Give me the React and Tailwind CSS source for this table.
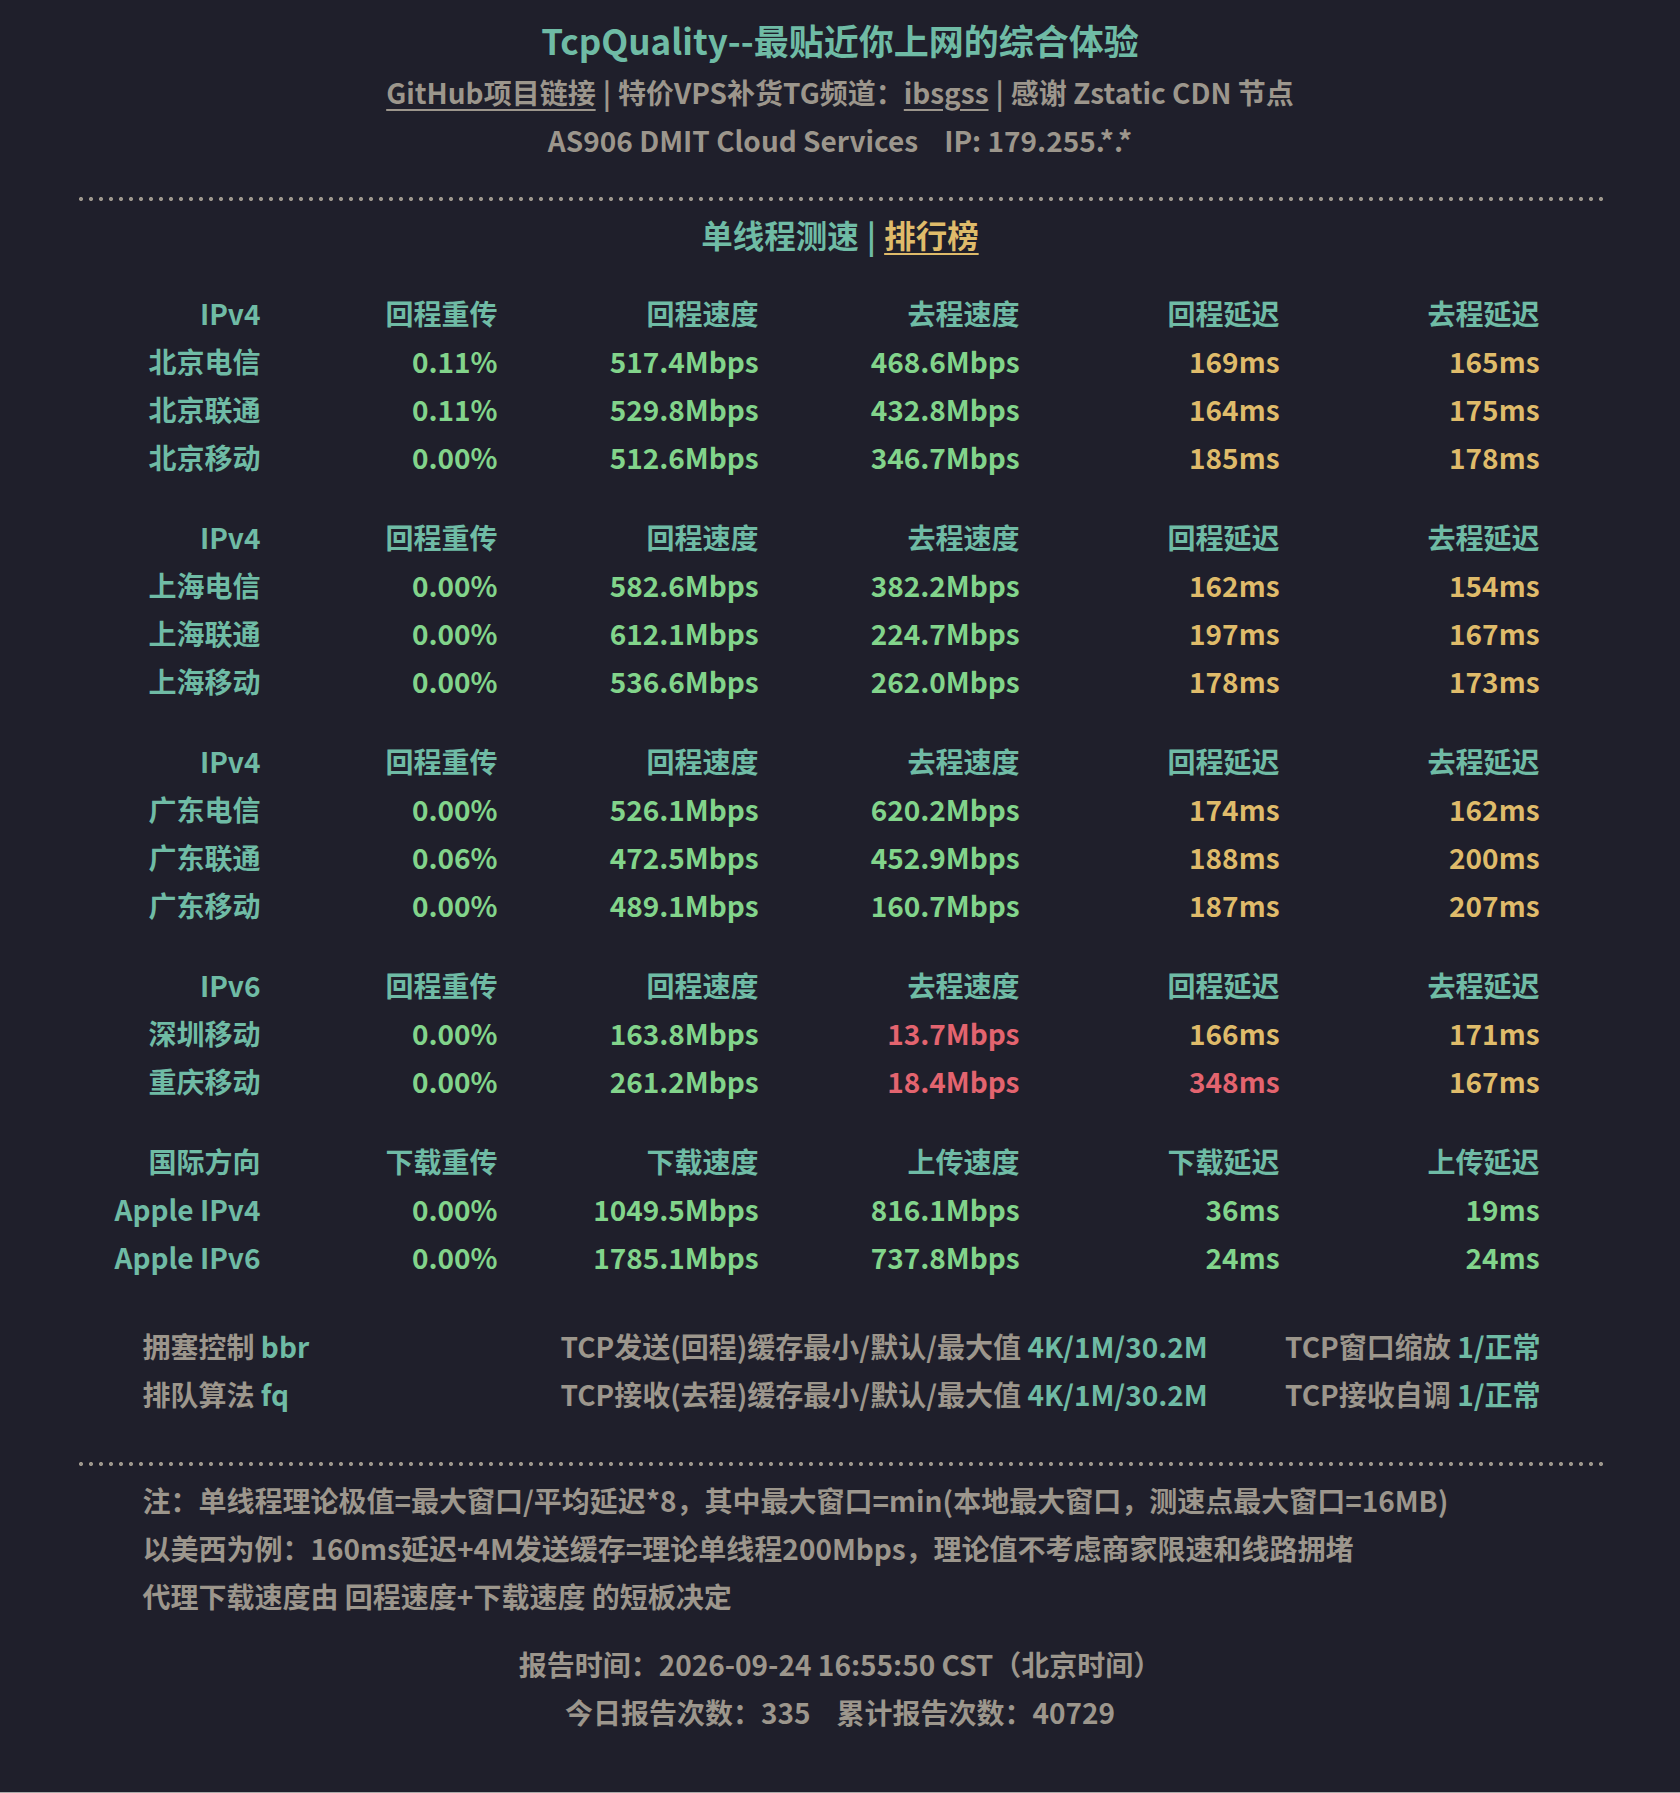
const groups = [
  {
    head: ['IPv4', '回程重传', '回程速度', '去程速度', '回程延迟', '去程延迟'],
    rows: [
      ['北京电信', '0.11%', '517.4Mbps', '468.6Mbps', '169ms', '165ms'],
      ['北京联通', '0.11%', '529.8Mbps', '432.8Mbps', '164ms', '175ms'],
      ['北京移动', '0.00%', '512.6Mbps', '346.7Mbps', '185ms', '178ms'],
    ],
  },
  {
    head: ['IPv4', '回程重传', '回程速度', '去程速度', '回程延迟', '去程延迟'],
    rows: [
      ['上海电信', '0.00%', '582.6Mbps', '382.2Mbps', '162ms', '154ms'],
      ['上海联通', '0.00%', '612.1Mbps', '224.7Mbps', '197ms', '167ms'],
      ['上海移动', '0.00%', '536.6Mbps', '262.0Mbps', '178ms', '173ms'],
    ],
  },
  {
    head: ['IPv4', '回程重传', '回程速度', '去程速度', '回程延迟', '去程延迟'],
    rows: [
      ['广东电信', '0.00%', '526.1Mbps', '620.2Mbps', '174ms', '162ms'],
      ['广东联通', '0.06%', '472.5Mbps', '452.9Mbps', '188ms', '200ms'],
      ['广东移动', '0.00%', '489.1Mbps', '160.7Mbps', '187ms', '207ms'],
    ],
  },
  {
    head: ['IPv6', '回程重传', '回程速度', '去程速度', '回程延迟', '去程延迟'],
    rows: [
      ['深圳移动', '0.00%', '163.8Mbps', '13.7Mbps', '166ms', '171ms'],
      ['重庆移动', '0.00%', '261.2Mbps', '18.4Mbps', '348ms', '167ms'],
    ],
  },
  {
    head: ['国际方向', '下载重传', '下载速度', '上传速度', '下载延迟', '上传延迟'],
    rows: [
      ['Apple IPv4', '0.00%', '1049.5Mbps', '816.1Mbps', '36ms', '19ms'],
      ['Apple IPv6', '0.00%', '1785.1Mbps', '737.8Mbps', '24ms', '24ms'],
    ],
    intl: true,
  },
]

// colour rules for a value cell
function cellColor(col, value, intl) {
  if (col === 3 && parseFloat(value) < 100) return 'text-[#e3646f]'
  if (col >= 4) {
    if (intl) return 'text-[#82d48b]'
    if (parseFloat(value) >= 300) return 'text-[#e3646f]'
    return 'text-[#dfbb6a]'
  }
  return 'text-[#82d48b]'
}

const Dots = () => (
  <div className="-ml-[3px] w-[1530px] h-[4px] bg-repeat-x bg-[radial-gradient(circle,#9c968c_1.8px,transparent_2.3px)] bg-size-[10px_4px]" />
)

const Sep = () => <span className="mx-[7px] font-bold">|</span>

export default function App() {
  return (
    <div className="bg-[#1f1f2b] font-['Noto_Sans_CJK_SC','Noto_Sans',sans-serif] font-bold">
      <div className="min-h-[1792px] w-[1523px] mx-auto">
        {/* Header */}
        <div className="pt-[14px] text-center">
          <h1 className="text-[35px] leading-[52px] text-[#6fbba5]">TcpQuality--最贴近你上网的综合体验</h1>
          <div className="mt-[2px] text-[28px] leading-[48px] text-[#9c968c]">
            <span className="underline decoration-2 underline-offset-[5px]">GitHub项目链接</span>
            <Sep />
            特价VPS补货TG频道：
            <span className="underline decoration-2 underline-offset-[5px]">ibsgss</span>
            <Sep />
            感谢 Zstatic CDN 节点
          </div>
          <div className="text-[28px] leading-[48px] text-[#9c968c]">
            AS906 DMIT Cloud Services<span className="ml-[26px]">IP: 179.255.*.*</span>
          </div>
        </div>

        <div className="mt-[33px]">
          <Dots />
        </div>

        <div className="mt-[9px] text-center text-[31.5px] leading-[48px]">
          <span className="text-[#6fbba5]">单线程测速</span>
          <span className="mx-[8px] text-[#6fbba5]">|</span>
          <span className="text-[#dfbb6a] underline decoration-2 underline-offset-[5px]">排行榜</span>
        </div>

        {/* Speed tables */}
        <div className="mt-[31px] flex flex-col gap-[32px]">
          {groups.map((g, gi) => (
            <div key={gi} className="grid grid-cols-[182px_237px_261px_261px_260px_260px] text-right text-[28px] leading-[48px]">
              {g.head.map((h, i) => (
                <div key={'h' + i} className="text-[#6fbba5] whitespace-nowrap">{h}</div>
              ))}
              {g.rows.map((r, ri) =>
                r.map((c, ci) => (
                  <div
                    key={ri + '-' + ci}
                    className={`whitespace-nowrap ${ci === 0 ? 'text-[#6fbba5]' : cellColor(ci, c, g.intl)}`}
                  >
                    {c}
                  </div>
                ))
              )}
            </div>
          ))}
        </div>

        {/* TCP settings */}
        <div className="mt-[41px] pl-[64px] pr-[61px] grid grid-cols-[418px_1fr_auto] text-[28px] leading-[48px] text-[#9c968c] whitespace-nowrap">
          <div>拥塞控制 <span className="text-[#6fbba5]">bbr</span></div>
          <div>TCP发送(回程)缓存最小/默认/最大值 <span className="text-[#6fbba5]">4K/1M/30.2M</span></div>
          <div>TCP窗口缩放 <span className="text-[#6fbba5]">1/正常</span></div>
          <div>排队算法 <span className="text-[#6fbba5]">fq</span></div>
          <div>TCP接收(去程)缓存最小/默认/最大值 <span className="text-[#6fbba5]">4K/1M/30.2M</span></div>
          <div>TCP接收自调 <span className="text-[#6fbba5]">1/正常</span></div>
        </div>

        <div className="mt-[44px]">
          <Dots />
        </div>

        {/* Notes */}
        <div className="mt-[10px] pl-[64px] text-[28px] leading-[48px] text-[#9c968c]">
          <p>注：单线程理论极值=最大窗口/平均延迟*8，其中最大窗口=min(本地最大窗口，测速点最大窗口=16MB)</p>
          <p>以美西为例：160ms延迟+4M发送缓存=理论单线程200Mbps，理论值不考虑商家限速和线路拥堵</p>
          <p>代理下载速度由 回程速度+下载速度 的短板决定</p>
        </div>

        {/* Footer */}
        <div className="mt-[20px] text-center text-[28px] leading-[48px] text-[#9c968c]">
          <p>报告时间：2026-09-24 16:55:50 CST（北京时间）</p>
          <p>
            今日报告次数：335<span className="ml-[26px]">累计报告次数：40729</span>
          </p>
        </div>
      </div>
      <div className="h-[1px] bg-[#a9a9a9]" />
    </div>
  )
}
